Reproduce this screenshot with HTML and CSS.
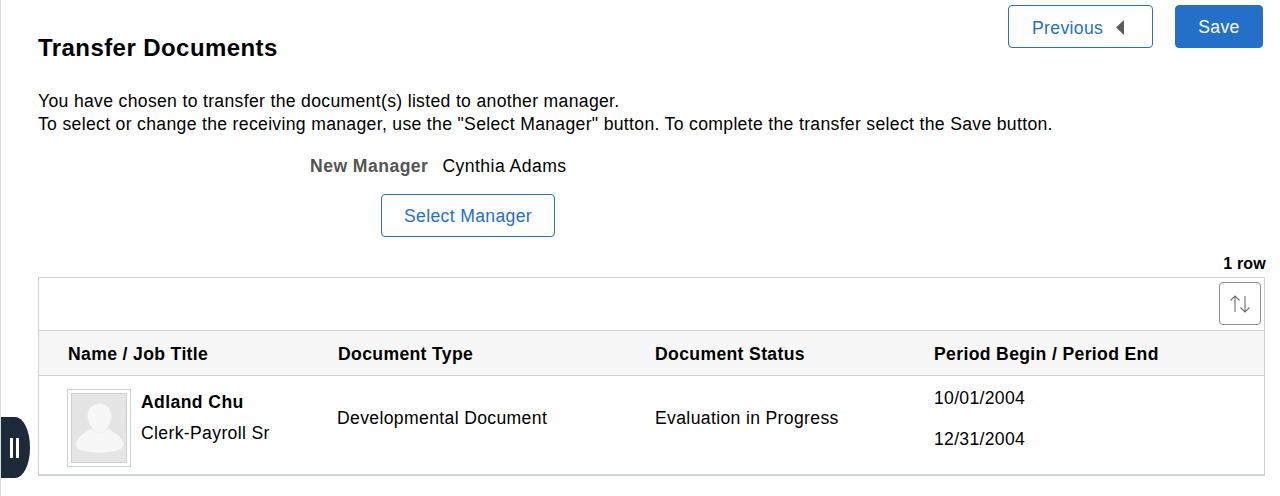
FILE: index.html
```html
<!DOCTYPE html>
<html lang="en">
<head>
<meta charset="utf-8">
<title>Transfer Documents</title>
<link rel="stylesheet" href="styles.css">
</head>
<body>
<div class="page">
  <header class="top">
    <h1 class="title">Transfer Documents</h1>
    <div class="actions">
      <button class="btn btn-prev"><span class="prev-label">Previous</span><svg class="caret" width="8" height="15" viewBox="0 0 8 15"><path d="M8 0V15L0 7.500Z" fill="#5a5a5a"/></svg></button>
      <button class="btn btn-save">Save</button>
    </div>
  </header>
  <p class="intro">You have chosen to transfer the document(s) listed to another manager.<br>To select or change the receiving manager, use the "Select Manager" button. To complete the transfer select the Save button.</p>
  <div class="manager-row"><span class="manager-label">New Manager</span><span class="manager-name">Cynthia Adams</span></div>
  <div class="select-row"><button class="btn btn-select">Select Manager</button></div>
  <div class="row-count">1 row</div>
  <section class="grid">
    <div class="toolbar">
      <button class="sort" aria-label="Sort"><svg width="22" height="22" viewBox="0 0 22 22" fill="none" stroke="#707070" stroke-width="1.1"><path d="M6 19V3M1.500 7.500 6 3l4.500 4.500M16 3v16M11.500 14.500 16 19l4.500-4.500"/></svg></button>
    </div>
    <div class="cols head">
      <div>Name / Job Title</div>
      <div>Document Type</div>
      <div>Document Status</div>
      <div>Period Begin / Period End</div>
    </div>
    <div class="cols body-row">
      <div class="person">
        <div class="photo"><div class="photo-inner"><svg width="53" height="66" viewBox="0 0 53 66"><path d="M3 50C3 43 10 38 18 34C21 37 32 37 35 34C43 38 50.500 43 50.500 50C50.500 55 39 57.500 26.700 57.500C14 57.500 3 55 3 50Z" fill="#f7f7f7"/><path d="M26.500 8.500C34 8.500 38.500 14 38.500 21C38.500 29 32 38.500 26.500 38.500C21 38.500 14.500 29 14.500 21C14.500 14 19 8.500 26.500 8.500Z" fill="#f7f7f7" stroke="#ebebeb"/></svg></div></div>
        <div class="person-text"><div class="person-name">Adland Chu</div><div class="person-job">Clerk-Payroll Sr</div></div>
      </div>
      <div class="cell-text">Developmental Document</div>
      <div class="cell-text">Evaluation in Progress</div>
      <div class="dates"><div>10/01/2004</div><div>12/31/2004</div></div>
    </div>
  </section>
</div>
<button class="handle" aria-label="Open panel"><span class="bar"></span><span class="bar"></span></button>
</body>
</html>
```
FILE: styles.css
```css
* { box-sizing: border-box; }
html, body { margin: 0; padding: 0; height: 100%; }
body {
  font-family: "Liberation Sans", Arial, sans-serif;
  font-size: 17.6px;
  letter-spacing: 0.35px;
  color: #000;
  background: #fff;
  border-left: 1px solid #d8dadd;
  overflow: hidden;
}
.page { padding: 5px 15px 0 37px; }
.top { display: flex; justify-content: space-between; align-items: flex-start; height: 43px; }
.title { margin: 29px 0 0; font-size: 24px; line-height: 28px; font-weight: bold; letter-spacing: 0.43px; }
.actions { display: flex; gap: 22px; margin-right: 2px; }
.btn {
  font: inherit;
  letter-spacing: inherit;
  height: 43px;
  border-radius: 4px;
  border: 1px solid #2470c8;
  background: #fff;
  color: #2470c8;
  padding: 1px 0 0;
  cursor: pointer;
}
.btn-prev { width: 145px; display: flex; align-items: center; justify-content: flex-start; gap: 13px; padding: 0 0 0 23px; }
.prev-label { padding-top: 3px; }
.caret { margin-top: 1px; }
.btn-save { width: 88px; background: #2470c8; color: #fff; }
.btn-select { width: 174px; }
.intro { margin: 42px 0 0; line-height: 23px; letter-spacing: 0.325px; }
.manager-row { margin-top: 18px; margin-left: 272px; line-height: 24px; display: flex; gap: 14px; }
.manager-label { font-weight: bold; color: #555; letter-spacing: 0.45px; }
.manager-name { letter-spacing: 0.45px; }
.select-row { margin-top: 16px; margin-left: 343px; }
.row-count { margin-top: 16px; margin-bottom: 2px; text-align: right; font-weight: bold; font-size: 16px; letter-spacing: 0.2px; line-height: 22px; margin-right: -1px; }
.grid { border: 1px solid #d0d3d6; border-bottom-width: 2px; height: 199px; }
.toolbar { height: 53px; display: flex; justify-content: flex-end; align-items: flex-start; padding: 4px 3px 0 0; border-bottom: 1px solid #d0d3d6; }
.sort { width: 42px; height: 43px; background: #fff; border: 1px solid #8f8f8f; border-radius: 4px; padding: 0; display: flex; align-items: center; justify-content: center; }
.cols { display: grid; }
.head { grid-template-columns: 270px 317px 279px 1fr; height: 45px; background: #f7f7f7; border-bottom: 1px solid #d0d3d6; align-items: center; font-weight: bold; padding: 2px 0 0 29px; }
.body-row { grid-template-columns: 270px 318px 279px 1fr; height: 99px; align-items: start; padding-left: 28px; }
.person { display: flex; gap: 10px; padding-top: 13px; }
.photo { width: 64px; height: 78px; border: 1px solid #d0d3d6; padding: 3px; }
.photo-inner { width: 100%; height: 100%; background: #e5e5e5; border: 1px solid #d0d0d0; display: flex; align-items: center; justify-content: center; }
.person-text { margin-top: 1px; line-height: 24px; }
.person-name { font-weight: bold; margin-bottom: 7px; letter-spacing: 0.4px; }
.cell-text { margin-top: 30px; line-height: 24px; }
.dates { display: flex; flex-direction: column; gap: 18px; line-height: 23px; margin-top: 11px; letter-spacing: 0.3px; }
.handle { position: absolute; left: 1px; top: 417px; width: 29px; height: 61px; padding: 0 3px 0 0; border: 0; background: #1c2a3a; border-radius: 0 15px 15px 0 / 0 30px 30px 0; display: flex; align-items: center; justify-content: center; gap: 3px; }
.bar { width: 3px; height: 20px; background: #fff; }
```
